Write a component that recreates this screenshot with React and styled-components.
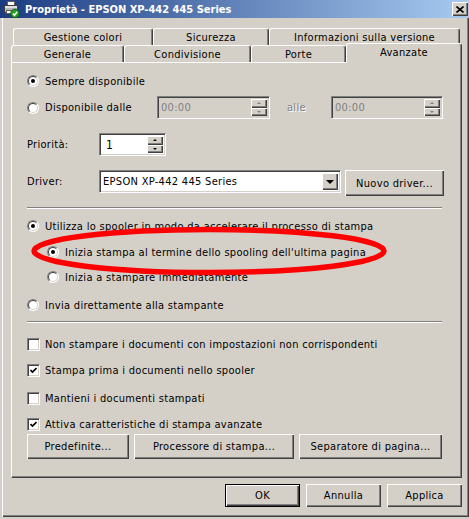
import React from "react";
import styled, { createGlobalStyle, css } from "styled-components";

const GlobalStyle = createGlobalStyle`
  html, body {
    margin: 0;
    padding: 0;
    background: #d4d0c8;
  }
  body {
    font-family: "DejaVu Sans", "Liberation Sans", sans-serif;
    font-stretch: condensed;
    font-size: 11px;
    letter-spacing: 0.3px;
    color: #000;
  }
`;

const raised = css`
  background: #d4d0c8;
  box-shadow: inset 1px 1px 0 #fff, inset -1px -1px 0 #404040,
    inset -2px -2px 0 #808080;
`;

const sunken = css`
  border: 1px solid;
  border-color: #808080 #fff #fff #808080;
  box-shadow: inset 1px 1px 0 #404040, inset -1px -1px 0 #d4d0c8;
`;

const Window = styled.div`
  position: relative;
  width: 469px;
  height: 517px;
  box-sizing: border-box;
  background: #d4d0c8;
  box-shadow: inset 2px 0 0 #d4d0c8, inset 3px 0 0 #fff,
    inset -1px -1px 0 #404040, inset -2px -2px 0 #808080;
`;

const TitleBar = styled.div`
  height: 18px;
  display: flex;
  align-items: center;
  padding-left: 3px;
  background: linear-gradient(90deg, #1c3c82 0%, #a6caf0 100%);
  color: #fff;
  font-weight: bold;
`;

const Title = styled.span`
  margin-left: 5px;
  letter-spacing: 0;
`;

const CloseButton = styled.div`
  ${raised};
  width: 16px;
  height: 14px;
  margin-left: auto;
  margin-right: 1px;
  display: flex;
  align-items: center;
  justify-content: center;
`;

const Body = styled.div`
  padding: 10px 7px 0 11px;
`;

const TabRow = styled.div`
  display: flex;
  padding-left: ${(p) => p.$offset || 0}px;
  height: 17px;
`;

const Tab = styled.div`
  width: ${(p) => p.$w}px;
  height: 17px;
  box-sizing: border-box;
  flex-shrink: 0;
  border-top: 1px solid #fff;
  border-left: 1px solid #fff;
  border-right: 1px solid #404040;
  border-radius: 3px 3px 0 0;
  box-shadow: inset -1px 0 0 #808080;
  background: #d4d0c8;
  display: flex;
  align-items: center;
  justify-content: center;
  ${(p) =>
    p.$active &&
    css`
      position: relative;
      z-index: 1;
      height: 20px;
      margin-top: -2px;
      align-items: flex-start;
      padding-top: 2px;
    `}
`;

const Panel = styled.div`
  width: 451px;
  height: 416px;
  box-sizing: border-box;
  border-top: 1px solid #fff;
  border-left: 1px solid #fff;
  border-right: 1px solid #404040;
  border-bottom: 1px solid #404040;
  box-shadow: inset -1px -1px 0 #808080;
  padding: 0 15px;
`;

const Line = styled.div`
  display: flex;
  align-items: ${(p) => p.$align || "center"};
  height: ${(p) => p.$h || 16}px;
  margin-top: ${(p) => p.$top}px;
  margin-left: ${(p) => p.$indent || 0}px;
  gap: ${(p) => p.$gap || 0}px;
`;

const Label = styled.span`
  display: flex;
  align-items: center;
  box-sizing: border-box;
  width: ${(p) => (p.$w ? `${p.$w}px` : "auto")};
  flex-shrink: 0;
  white-space: nowrap;
  padding-left: ${(p) => p.$pl || 0}px;
  color: ${(p) => (p.$disabled ? "#808080" : "#000")};
  text-shadow: ${(p) => (p.$disabled ? "1px 1px 0 #fff" : "none")};
`;

const Radio = styled.span`
  position: relative;
  width: 12px;
  height: 12px;
  box-sizing: border-box;
  flex-shrink: 0;
  margin-right: 6px;
  border-radius: 50%;
  border: 1px solid;
  border-color: #808080 #fff #fff #808080;
  background: #fff;
  &::before {
    content: "";
    position: absolute;
    inset: 0;
    box-sizing: border-box;
    border-radius: 50%;
    border: 1px solid;
    border-color: #404040 #d4d0c8 #d4d0c8 #404040;
  }
  ${(p) =>
    p.$checked &&
    css`
      &::after {
        content: "";
        position: absolute;
        left: 3px;
        top: 3px;
        width: 4px;
        height: 4px;
        border-radius: 50%;
        background: #000;
      }
    `}
`;

const Check = styled.span`
  width: 13px;
  height: 13px;
  box-sizing: border-box;
  flex-shrink: 0;
  margin-right: 5px;
  background: #fff;
  ${sunken};
  display: flex;
  align-items: center;
  justify-content: center;
`;

const Field = styled.div`
  width: ${(p) => p.$w}px;
  height: ${(p) => p.$h || 23}px;
  box-sizing: border-box;
  flex-shrink: 0;
  display: flex;
  padding: 2px;
  background: ${(p) => (p.$disabled ? "#d4d0c8" : "#fff")};
  ${sunken};
`;

const FieldText = styled.span`
  flex: 1;
  display: flex;
  align-items: center;
  padding-left: ${(p) => p.$pl || 1}px;
  color: ${(p) => (p.$disabled ? "#808080" : "#000")};
  font-size: ${(p) => p.$size || 11}px;
`;

const Spin = styled.div`
  width: 16px;
  display: flex;
  flex-direction: column;
`;

const SpinButton = styled.div`
  ${raised};
  flex: 1;
  display: flex;
  align-items: center;
  justify-content: center;
`;

const Arrow = styled.span`
  width: 0;
  height: 0;
  border-left: ${(p) => p.$size}px solid transparent;
  border-right: ${(p) => p.$size}px solid transparent;
  ${(p) =>
    p.$up
      ? css`
          border-bottom: ${p.$tall}px solid ${p.$color};
        `
      : css`
          border-top: ${p.$tall}px solid ${p.$color};
        `}
`;

const Button = styled.button`
  ${raised};
  width: ${(p) => p.$w}px;
  height: ${(p) => p.$h || 23}px;
  box-sizing: border-box;
  flex-shrink: 0;
  padding: 0;
  margin: 0;
  font: inherit;
  letter-spacing: inherit;
  color: #000;
  border: ${(p) => (p.$default ? "1px solid #000" : "none")};
  display: flex;
  align-items: center;
  justify-content: center;
`;

const Separator = styled.div`
  width: 415px;
  height: 0;
  margin-top: ${(p) => p.$top}px;
  border-top: 1px solid #808080;
  border-bottom: 1px solid #fff;
`;

const Footer = styled.div`
  display: flex;
  justify-content: flex-end;
  gap: 6px;
  margin-top: 6px;
`;

const Highlight = styled.svg`
  position: absolute;
  left: 0;
  top: 0;
  pointer-events: none;
  z-index: 5;
`;

const PrinterIcon = () => (
  <svg width="17" height="17" viewBox="0 0 17 17">
    <rect x="4.5" y="0.5" width="7" height="5" fill="#fff" stroke="#606060" />
    <rect x="1.5" y="4.5" width="13" height="7" fill="#b8b8b8" stroke="#404040" />
    <rect x="2" y="5" width="12" height="2" fill="#e0e0e0" />
    <rect x="3.5" y="9.5" width="9" height="3" fill="#fff" stroke="#606060" />
    <circle cx="12" cy="12.5" r="4.3" fill="#22a022" stroke="#0d600d" />
    <path d="M9.8 12.5 L11.4 14.2 L14.3 10.8" fill="none" stroke="#fff" strokeWidth="1.6" />
  </svg>
);

const TimeBox = ({ w }) => (
  <Field $w={w} $h={23} $disabled>
    <FieldText $disabled>00:00</FieldText>
    <Spin>
      <SpinButton>
        <Arrow $up $size={2} $tall={2} $color="#808080" />
      </SpinButton>
      <SpinButton>
        <Arrow $size={2} $tall={2} $color="#808080" />
      </SpinButton>
    </Spin>
  </Field>
);

const RadioLine = ({ top, indent, checked, children }) => (
  <Line $top={top} $indent={indent}>
    <Radio $checked={checked} />
    <Label>{children}</Label>
  </Line>
);

const CheckLine = ({ top, checked, children }) => (
  <Line $top={top}>
    <Check>
      {checked && (
        <svg width="7" height="7" viewBox="0 0 7 7">
          <path d="M0.5 3 L2.5 5 L6.5 1" fill="none" stroke="#000" strokeWidth="1.7" />
        </svg>
      )}
    </Check>
    <Label>{children}</Label>
  </Line>
);

export default function App() {
  return (
    <Window>
      <GlobalStyle />
      <TitleBar>
        <PrinterIcon />
        <Title>Proprietà - EPSON XP-442 445 Series</Title>
        <CloseButton>
          <svg width="8" height="7" viewBox="0 0 8 7">
            <path d="M0.5 0.5 L7.5 6.5 M7.5 0.5 L0.5 6.5" stroke="#000" strokeWidth="1.6" />
          </svg>
        </CloseButton>
      </TitleBar>

      <Body>
        <TabRow $offset={2}>
          <Tab $w={140}>Gestione colori</Tab>
          <Tab $w={116}>Sicurezza</Tab>
          <Tab $w={191}>Informazioni sulla versione</Tab>
        </TabRow>
        <TabRow>
          <Tab $w={113}>Generale</Tab>
          <Tab $w={127}>Condivisione</Tab>
          <Tab $w={95}>Porte</Tab>
          <Tab $w={116} $active>
            Avanzate
          </Tab>
        </TabRow>

        <Panel>
          <RadioLine top={10} checked>
            Sempre disponibile
          </RadioLine>

          <Line $top={7} $h={23}>
            <Radio />
            <Label $w={112}>Disponibile dalle</Label>
            <TimeBox w={113} />
            <Label $w={61} $pl={17} $disabled>
              alle
            </Label>
            <TimeBox w={112} />
          </Line>

          <Line $top={14} $h={23}>
            <Label $w={72}>Priorità:</Label>
            <Field $w={67}>
              <FieldText $pl={4} $size={12}>
                1
              </FieldText>
              <Spin>
                <SpinButton>
                  <Arrow $up $size={2} $tall={2} $color="#000" />
                </SpinButton>
                <SpinButton>
                  <Arrow $size={2} $tall={2} $color="#000" />
                </SpinButton>
              </Spin>
            </Field>
          </Line>

          <Line $top={14} $h={26} $align="flex-start">
            <Label $w={72} style={{ height: 23 }}>
              Driver:
            </Label>
            <Field $w={242}>
              <FieldText $pl={1}>EPSON XP-442 445 Series</FieldText>
              <SpinButton style={{ flex: "0 0 16px" }}>
                <Arrow $size={4} $tall={4} $color="#000" />
              </SpinButton>
            </Field>
            <Button $w={99} $h={26} style={{ marginLeft: 4 }}>
              Nuovo driver...
            </Button>
          </Line>

          <Separator $top={11} />

          <RadioLine top={9} checked>
            Utilizza lo spooler in modo da accelerare il processo di stampa
          </RadioLine>
          <RadioLine top={10} indent={20} checked>
            Inizia stampa al termine dello spooling dell'ultima pagina
          </RadioLine>
          <RadioLine top={9} indent={20}>
            Inizia a stampare immediatamente
          </RadioLine>
          <RadioLine top={12}>Invia direttamente alla stampante</RadioLine>

          <Separator $top={8} />

          <CheckLine top={13}>
            Non stampare i documenti con impostazioni non corrispondenti
          </CheckLine>
          <CheckLine top={10} checked>
            Stampa prima i documenti nello spooler
          </CheckLine>
          <CheckLine top={12}>Mantieni i documenti stampati</CheckLine>
          <CheckLine top={10} checked>
            Attiva caratteristiche di stampa avanzate
          </CheckLine>

          <Line $top={2} $h={25} $gap={5}>
            <Button $w={102} $h={25}>
              Predefinite...
            </Button>
            <Button $w={160} $h={25}>
              Processore di stampa...
            </Button>
            <Button $w={143} $h={25}>
              Separatore di pagina...
            </Button>
          </Line>
        </Panel>

        <Footer>
          <Button $w={75} $default>
            OK
          </Button>
          <Button $w={75}>Annulla</Button>
          <Button $w={75}>Applica</Button>
        </Footer>
      </Body>

      <Highlight width="469" height="519" viewBox="0 0 469 519">
        <ellipse cx="209" cy="251" rx="175" ry="21.5" fill="none" stroke="#ff0000" strokeWidth="5.5" />
      </Highlight>
    </Window>
  );
}
